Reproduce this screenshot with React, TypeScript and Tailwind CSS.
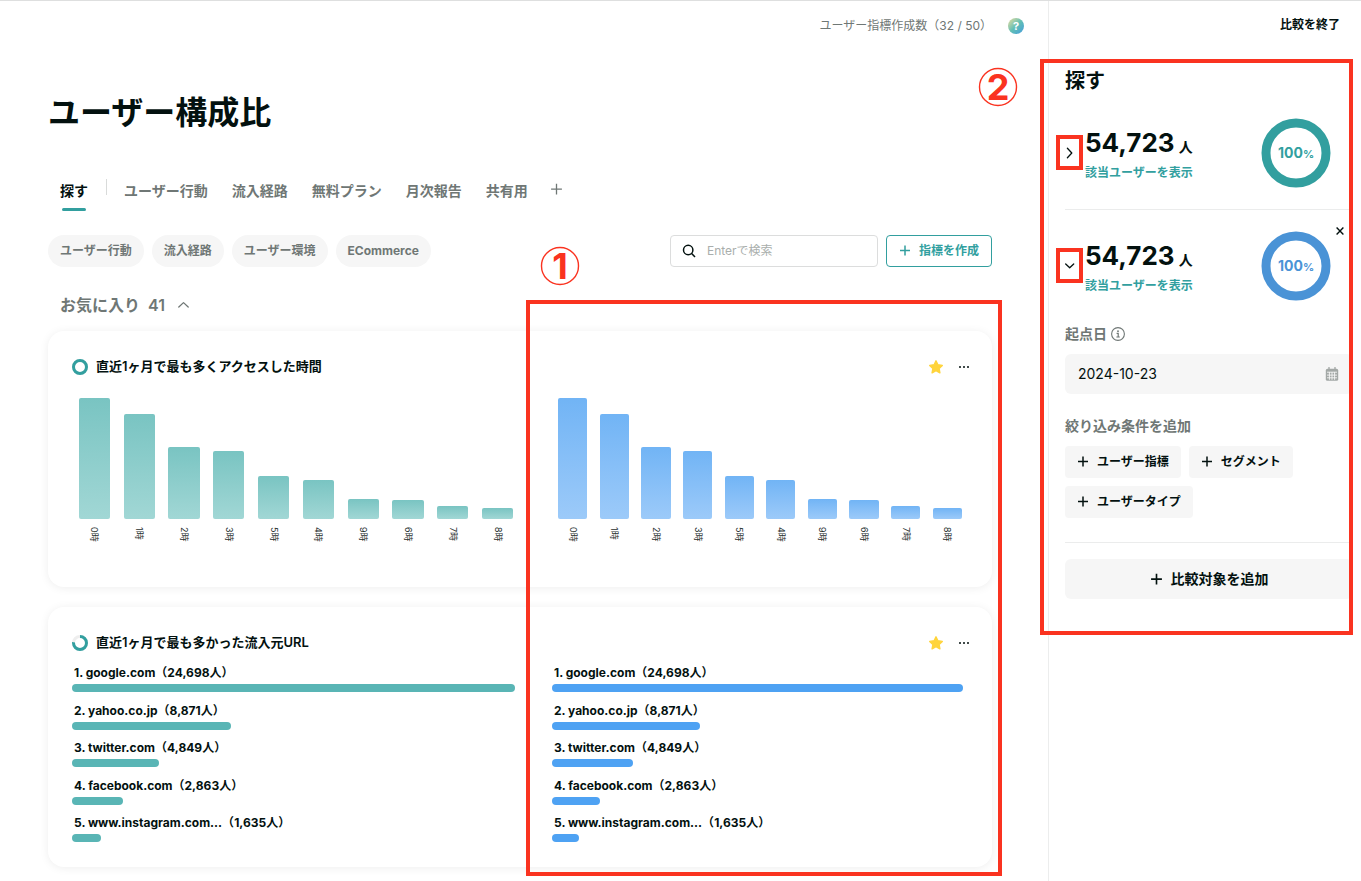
import { useState } from "react";
import type { ReactNode } from "react";

type Tone = "teal" | "blue";

const tabs = ["ユーザー行動", "流入経路", "無料プラン", "月次報告", "共有用"];
const categories = ["ユーザー行動", "流入経路", "ユーザー環境", "ECommerce"];
const conditions = ["ユーザー指標", "セグメント", "ユーザータイプ"];

const hours = [
  { label: "0時", height: 121 },
  { label: "1時", height: 105 },
  { label: "2時", height: 72 },
  { label: "3時", height: 68 },
  { label: "5時", height: 43 },
  { label: "4時", height: 39 },
  { label: "9時", height: 20 },
  { label: "6時", height: 19 },
  { label: "7時", height: 13 },
  { label: "8時", height: 11 },
];

const referrers = [
  { name: "google.com", count: 24698 },
  { name: "yahoo.co.jp", count: 8871 },
  { name: "twitter.com", count: 4849 },
  { name: "facebook.com", count: 2863 },
  { name: "www.instagram.com...", count: 1635 },
];

function PlusIcon({ size = 12, width = 1.5 }: { size?: number; width?: number }) {
  return (
    <svg width={size} height={size} viewBox="0 0 12 12" fill="none" stroke="currentColor" strokeWidth={width} aria-hidden="true">
      <path d="M6 .6v10M1 5.6h10" />
    </svg>
  );
}

function Chevron({ d }: { d: string }) {
  return (
    <svg width="12" height="12" viewBox="0 0 12 12" fill="none" stroke="currentColor" strokeWidth="1.3" strokeLinecap="round" strokeLinejoin="round" aria-hidden="true">
      <path d={d} />
    </svg>
  );
}

function SearchIcon() {
  return (
    <svg width="14" height="14" viewBox="0 0 14 14" fill="none" stroke="currentColor" strokeWidth="1.5" aria-hidden="true">
      <circle cx="6.2" cy="6" r="4.7" />
      <path d="M9.6 9.4l3.4 3.5" />
    </svg>
  );
}

function StarIcon() {
  return (
    <svg width="16" height="16" viewBox="0 0 16 16" fill="#ffd43b" stroke="#ffd43b" strokeWidth="1.4" strokeLinejoin="round" aria-hidden="true">
      <path d="M8 1.8l1.9 4 4.4.6-3.2 3 .8 4.4L8 11.7l-3.9 2.1.8-4.4-3.2-3 4.4-.6z" />
    </svg>
  );
}

function InfoIcon() {
  return (
    <svg width="14" height="14" viewBox="0 0 14 14" fill="none" stroke="currentColor" aria-hidden="true">
      <circle cx="7" cy="7" r="6.4" strokeWidth="1.1" />
      <path d="M5.6 6.3h1.6v3.6M5.4 10h3.4" strokeWidth="1.2" />
      <circle cx="7" cy="4.2" r="0.9" fill="currentColor" stroke="none" />
    </svg>
  );
}

function CalendarIcon() {
  return (
    <svg width="14" height="14" viewBox="0 0 14 14" aria-hidden="true">
      <path d="M4 .6v2.6M10 .6v2.6" stroke="#a3a8a6" strokeWidth="1.4" strokeLinecap="round" />
      <rect x="0.8" y="1.8" width="12.4" height="12" rx="1.6" fill="#a3a8a6" />
      <path d="M2 5.2h10M2 8.1h10M2 10.8h10M4.4 5v7.8M7 5v7.8M9.6 5v7.8" stroke="#f6f6f6" strokeWidth="0.9" />
    </svg>
  );
}

function MiniRing({ percent }: { percent: number }) {
  return (
    <svg width="16" height="16" viewBox="0 0 16 16" fill="none" strokeWidth="3" aria-hidden="true">
      <circle cx="8" cy="8" r="6.5" stroke="#eeeeee" />
      <circle cx="8" cy="8" r="6.5" stroke="#329f9f" pathLength={100} strokeDasharray={`${percent} 100`} transform="rotate(-90 8 8)" />
    </svg>
  );
}

function CircledNumber({ value }: { value: string }) {
  return (
    <svg className="overflow-visible" width="40" height="40" viewBox="0 0 40 40" fill="none">
      <circle cx="20" cy="20" r="18.5" stroke="#fa3320" strokeWidth="1.4" />
      <text x="20" y="33" textAnchor="middle" fill="#fa3320" fontSize="36" fontWeight="700" fontFamily="Inter, sans-serif">
        {value}
      </text>
    </svg>
  );
}

function HourChart({ tone }: { tone: Tone }) {
  const fill = tone === "teal" ? "from-[#79c4c2] to-[#a1d7d5]" : "from-[#71b4f5] to-[#9ccaf9]";
  return (
    <div>
      <div className="flex h-[121px] items-end">
        {hours.map((hour) => (
          <div key={hour.label} className="flex flex-1 justify-center">
            <div className={`w-[70%] rounded-xs bg-linear-to-b ${fill}`} style={{ height: hour.height }} />
          </div>
        ))}
      </div>
      <div className="flex h-11 pt-2">
        {hours.map((hour) => (
          <div key={hour.label} className="flex flex-1 justify-center">
            <span className="text-[9px] leading-[14px] text-[#28312f] [text-orientation:sideways] [writing-mode:vertical-rl]">
              {hour.label}
            </span>
          </div>
        ))}
      </div>
    </div>
  );
}

function ReferrerList({ tone }: { tone: Tone }) {
  const fill = tone === "teal" ? "bg-[#59b5b5]" : "bg-[#4ea2f3]";
  return (
    <ol className="grid h-[188px] grid-rows-5 pr-[5px]">
      {referrers.map((item, index) => (
        <li key={item.name}>
          <p className="pl-0.5 text-xs font-bold">
            {index + 1}. {item.name}（{item.count.toLocaleString("en-US")}人）
          </p>
          <div className={`mt-[3px] h-2 rounded-full ${fill}`} style={{ width: `${(item.count / referrers[0].count) * 100}%` }} />
        </li>
      ))}
    </ol>
  );
}

function MetricCard({ title, percent, children }: { title: string; percent: number; children: ReactNode }) {
  return (
    <article className="rounded-2xl bg-white shadow-[0_1px_10px_rgba(0,0,0,0.07)]">
      <header className="flex h-[58px] items-end pr-4 pl-6">
        <div className="flex h-11 flex-1 items-center gap-2">
          <MiniRing percent={percent} />
          <h3 className="text-[13px] font-semibold">{title}</h3>
        </div>
        <div className="flex h-11 items-center gap-3">
          <button type="button" aria-label="お気に入り" className="cursor-pointer">
            <StarIcon />
          </button>
          <button type="button" aria-label="メニュー" className="flex h-4 w-5 cursor-pointer items-center justify-start gap-0.5 pl-[3px]">
            <span className="size-0.5 rounded-full bg-[#03110f]" />
            <span className="size-0.5 rounded-full bg-[#03110f]" />
            <span className="size-0.5 rounded-full bg-[#03110f]" />
          </button>
        </div>
      </header>
      {children}
    </article>
  );
}

function AudienceSummary({ tone, open, onToggle }: { tone: Tone; open: boolean; onToggle: () => void }) {
  const color = tone === "teal" ? "text-[#329f9f]" : "text-[#4a93d6]";
  return (
    <div className="flex h-28 items-center justify-between pr-[22px]">
      <div className="flex items-center">
        <div className="relative flex w-5 items-center">
          <button type="button" onClick={onToggle} aria-label="詳細を開閉" aria-expanded={open} className="flex h-6 cursor-pointer items-center">
            <Chevron d={open ? "M.7 4l4 3.8 4-3.8" : "M2.4 1.3L6.8 6l-4.4 4.7"} />
          </button>
          <div className="pointer-events-none absolute -inset-y-[6px] -left-[9px] h-[35px] w-[27px] border-4 border-[#fa3320]" />
        </div>
        <div className="pt-[3px]">
          <p className="text-[26px] leading-9 font-bold">
            54,723<span className="ml-1 text-sm">人</span>
          </p>
          <a href="#users" className="block text-xs leading-6 font-semibold text-[#329f9f]">
            該当ユーザーを表示
          </a>
        </div>
      </div>
      <div className={`relative flex size-[70px] items-center justify-center ${color}`}>
        <svg className="absolute inset-0" width="70" height="70" viewBox="0 0 70 70" fill="none" aria-hidden="true">
          <circle cx="35" cy="35" r="30" stroke="currentColor" strokeWidth="9" />
        </svg>
        <span className="text-sm font-bold">
          100<span className="text-[11px]">%</span>
        </span>
      </div>
    </div>
  );
}

function ComparePanel() {
  const [baseOpen, setBaseOpen] = useState(false);
  const [targetOpen, setTargetOpen] = useState(true);

  return (
    <aside className="relative w-[313px] shrink-0 border-l border-[#eceded] pr-2 pl-4">
      <div className="flex h-12 items-center justify-end pr-[13px]">
        <button type="button" className="cursor-pointer text-xs font-semibold">
          比較を終了
        </button>
      </div>

      <h2 className="mt-4 text-xl leading-8 font-semibold">探す</h2>

      <AudienceSummary tone="teal" open={baseOpen} onToggle={() => setBaseOpen(!baseOpen)} />

      <section className="relative border-t border-[#ebecec]">
        <AudienceSummary tone="blue" open={targetOpen} onToggle={() => setTargetOpen(!targetOpen)} />
        <button type="button" aria-label="削除" className="absolute top-[15px] right-[7px] flex size-3 cursor-pointer items-center justify-center">
          <svg width="8" height="8" viewBox="0 0 8 8" stroke="currentColor" strokeWidth="1.4" aria-hidden="true">
            <path d="M.6.6l6.8 6.8M7.4.6L.6 7.4" />
          </svg>
        </button>

        {targetOpen && (
          <div className="pt-0.5 pb-6">
            <label htmlFor="start-date" className="flex h-5 items-center gap-1 text-sm font-semibold text-[#6f7775]">
              起点日
              <InfoIcon />
            </label>
            <div className="mt-[10px] flex h-10 items-center rounded-md bg-[#f6f6f6] pr-[14px] pl-[13px]">
              <input id="start-date" type="text" defaultValue="2024-10-23" className="min-w-0 flex-1 bg-transparent text-sm outline-none" />
              <CalendarIcon />
            </div>

            <h3 className="mt-[22px] text-sm font-semibold text-[#6f7775]">絞り込み条件を追加</h3>
            <div className="mt-[10px] flex flex-wrap gap-2">
              {conditions.map((name) => (
                <button key={name} type="button" className="flex h-8 cursor-pointer items-center gap-2 rounded-sm bg-[#f6f6f6] px-3 text-xs font-semibold">
                  <PlusIcon />
                  {name}
                </button>
              ))}
            </div>
          </div>
        )}
      </section>

      <div className="border-t border-[#ebecec] pt-4">
        <button type="button" className="flex h-10 w-full cursor-pointer items-center justify-center gap-2 rounded-md bg-[#f6f6f6] text-sm font-semibold">
          <PlusIcon size={13} />
          比較対象を追加
        </button>
      </div>

      <div className="pointer-events-none absolute top-[58px] right-2 -left-[9px] h-[576px] border-4 border-[#fa3320]" />
      <div className="pointer-events-none absolute top-[66px] -left-[71px]">
        <CircledNumber value="2" />
      </div>
    </aside>
  );
}

export default function App() {
  return (
    <div className="flex min-h-screen border-t border-[#dedfdf] bg-white font-['Inter','Noto_Sans_CJK_JP',sans-serif] text-[#03110f]">
      <main className="min-w-0 flex-1 pr-14 pb-3 pl-12">
        <div className="-mr-8 flex h-[50px] items-center justify-end gap-4">
          <p className="text-xs text-[#6f7775]">ユーザー指標作成数（32 / 50）</p>
          <button
            type="button"
            aria-label="ヘルプ"
            className="flex size-4 cursor-pointer items-center justify-center rounded-full bg-linear-to-br from-[#e6dc9a] via-[#62bfb4] to-[#479bdc] text-[11px] leading-4 font-bold text-white"
          >
            ?
          </button>
        </div>

        <h1 className="mt-[38px] text-[32px] leading-[48px] font-semibold">ユーザー構成比</h1>

        <nav className="mt-[34px] flex h-10 items-center text-sm font-semibold text-[#6f7775]">
          <button type="button" className="relative h-10 cursor-pointer px-3 text-[#03110f]">
            探す
            <span className="absolute inset-x-[14px] bottom-0 h-[3px] rounded-full bg-[#329f9f]" />
          </button>
          <span className="mr-[5px] mb-2 ml-1.5 h-4 w-px bg-[#d9dbda]" />
          {tabs.map((tab) => (
            <button key={tab} type="button" className="h-10 cursor-pointer px-3">
              {tab}
            </button>
          ))}
          <button type="button" aria-label="タブを追加" className="flex h-9 cursor-pointer items-center self-start px-2.5">
            <PlusIcon size={13} width={1.2} />
          </button>
        </nav>

        <div className="mt-6 flex items-center justify-between gap-4">
          <div className="flex gap-2 text-xs font-bold text-[#6f7775]">
            {categories.map((category) => (
              <button key={category} type="button" className="h-8 cursor-pointer rounded-full bg-[#f6f6f6] px-3">
                {category}
              </button>
            ))}
          </div>
          <div className="flex gap-2">
            <div className="flex h-8 w-52 items-center gap-[11px] rounded-sm border border-[#dcdddd] px-[11px]">
              <SearchIcon />
              <input type="search" aria-label="検索" placeholder="Enterで検索" className="min-w-0 flex-1 text-xs outline-none placeholder:text-[#a9aeac]" />
            </div>
            <button type="button" className="flex h-8 cursor-pointer items-center gap-2 rounded-sm border border-[#329f9f] px-3 text-xs font-semibold text-[#329f9f]">
              <PlusIcon />
              指標を作成
            </button>
          </div>
        </div>

        <button type="button" className="mt-[26px] ml-3 flex h-6 cursor-pointer items-center text-base font-semibold text-[#6f7775]">
          お気に入り
          <span className="mr-3 ml-2">41</span>
          <Chevron d="M1.8 8L6.5 3.6 11.2 8" />
        </button>

        <div className="relative mt-[14px] flex flex-col gap-5">
          <MetricCard title="直近1ヶ月で最も多くアクセスした時間" percent={100}>
            <div className="grid grid-cols-2 px-6 pt-[9px] pb-6">
              <HourChart tone="teal" />
              <div className="pl-8">
                <HourChart tone="blue" />
              </div>
            </div>
          </MetricCard>

          <MetricCard title="直近1ヶ月で最も多かった流入元URL" percent={77}>
            <div className="grid grid-cols-2 px-6 pb-[14px]">
              <ReferrerList tone="teal" />
              <div className="pl-8">
                <ReferrerList tone="blue" />
              </div>
            </div>
          </MetricCard>

          <div className="pointer-events-none absolute -top-[31px] -right-[10px] -bottom-[9px] left-[calc(50%+6px)] border-4 border-[#fa3320]" />
          <div className="pointer-events-none absolute -top-[85px] left-[calc(50%+20px)]">
            <CircledNumber value="1" />
          </div>
        </div>
      </main>

      <ComparePanel />
    </div>
  );
}
